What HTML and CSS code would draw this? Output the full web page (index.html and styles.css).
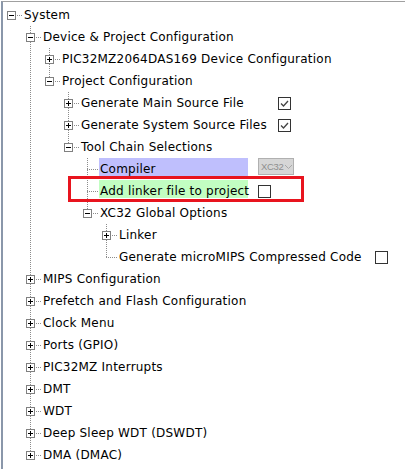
FILE: index.html
```html
<!DOCTYPE html>
<html>
<head>
<meta charset="utf-8">
<link rel="stylesheet" href="styles.css">
</head>
<body>
<div class="panel">
  <div class="tree">
    <div class="row">
      <span class="n h"><svg class="box" width="9" height="9" viewBox="0 0 9 9"><rect x="0.5" y="0.5" width="8" height="8" fill="#fff" stroke="#808080"/><path d="M2 4.5h5" stroke="#000"/></svg></span>
      <span class="label">System</span>
    </div>
    <div class="row">
      <span class="g"></span>
      <span class="n up down h"><svg class="box" width="9" height="9" viewBox="0 0 9 9"><rect x="0.5" y="0.5" width="8" height="8" fill="#fff" stroke="#808080"/><path d="M2 4.5h5" stroke="#000"/></svg></span>
      <span class="label">Device &amp; Project Configuration</span>
    </div>
    <div class="row">
      <span class="g"></span><span class="g v"></span>
      <span class="n up down h"><svg class="box" width="9" height="9" viewBox="0 0 9 9"><rect x="0.5" y="0.5" width="8" height="8" fill="#fff" stroke="#808080"/><path d="M2 4.5h5M4.5 2v5" stroke="#000"/></svg></span>
      <span class="label">PIC32MZ2064DAS169 Device Configuration</span>
    </div>
    <div class="row">
      <span class="g"></span><span class="g v"></span>
      <span class="n up h"><svg class="box" width="9" height="9" viewBox="0 0 9 9"><rect x="0.5" y="0.5" width="8" height="8" fill="#fff" stroke="#808080"/><path d="M2 4.5h5" stroke="#000"/></svg></span>
      <span class="label">Project Configuration</span>
    </div>
    <div class="row">
      <span class="g"></span><span class="g v"></span><span class="g"></span>
      <span class="n up down h"><svg class="box" width="9" height="9" viewBox="0 0 9 9"><rect x="0.5" y="0.5" width="8" height="8" fill="#fff" stroke="#808080"/><path d="M2 4.5h5M4.5 2v5" stroke="#000"/></svg></span>
      <span class="label w-gen">Generate Main Source File</span>
      <svg class="check" width="13" height="13" viewBox="0 0 13 13"><rect x="0.5" y="0.5" width="12" height="12" fill="#fff" stroke="#333"/><path d="M3 6.5l2.5 2.5l4.5-5" fill="none" stroke="#444" stroke-width="1.3"/></svg>
    </div>
    <div class="row">
      <span class="g"></span><span class="g v"></span><span class="g"></span>
      <span class="n up down h"><svg class="box" width="9" height="9" viewBox="0 0 9 9"><rect x="0.5" y="0.5" width="8" height="8" fill="#fff" stroke="#808080"/><path d="M2 4.5h5M4.5 2v5" stroke="#000"/></svg></span>
      <span class="label w-gen">Generate System Source Files</span>
      <svg class="check" width="13" height="13" viewBox="0 0 13 13"><rect x="0.5" y="0.5" width="12" height="12" fill="#fff" stroke="#333"/><path d="M3 6.5l2.5 2.5l4.5-5" fill="none" stroke="#444" stroke-width="1.3"/></svg>
    </div>
    <div class="row">
      <span class="g"></span><span class="g v"></span><span class="g"></span>
      <span class="n up h"><svg class="box" width="9" height="9" viewBox="0 0 9 9"><rect x="0.5" y="0.5" width="8" height="8" fill="#fff" stroke="#808080"/><path d="M2 4.5h5" stroke="#000"/></svg></span>
      <span class="label">Tool Chain Selections</span>
    </div>
    <div class="row">
      <span class="g"></span><span class="g v"></span><span class="g"></span><span class="g"></span>
      <span class="n up down h"></span>
      <span class="label w-tc hl-blue">Compiler</span>
      <span class="combo"><span class="combo-text">XC32</span><svg width="7" height="4" viewBox="0 0 7 4"><path d="M0 0l3.5 3.5l3.5-3.5" fill="none" stroke="#a8a8a8"/></svg></span>
    </div>
    <div class="row">
      <span class="g"></span><span class="g v"></span><span class="g"></span><span class="g"></span>
      <span class="n up down h"></span>
      <span class="label w-tc hl-green">Add linker file to project</span>
      <svg class="check" width="13" height="13" viewBox="0 0 13 13"><rect x="0.5" y="0.5" width="12" height="12" fill="#fff" stroke="#333"/></svg>
    </div>
    <div class="row">
      <span class="g"></span><span class="g v"></span><span class="g"></span><span class="g"></span>
      <span class="n up h"><svg class="box" width="9" height="9" viewBox="0 0 9 9"><rect x="0.5" y="0.5" width="8" height="8" fill="#fff" stroke="#808080"/><path d="M2 4.5h5" stroke="#000"/></svg></span>
      <span class="label">XC32 Global Options</span>
    </div>
    <div class="row">
      <span class="g"></span><span class="g v"></span><span class="g"></span><span class="g"></span><span class="g"></span>
      <span class="n up down h"><svg class="box" width="9" height="9" viewBox="0 0 9 9"><rect x="0.5" y="0.5" width="8" height="8" fill="#fff" stroke="#808080"/><path d="M2 4.5h5M4.5 2v5" stroke="#000"/></svg></span>
      <span class="label">Linker</span>
    </div>
    <div class="row">
      <span class="g"></span><span class="g v"></span><span class="g"></span><span class="g"></span><span class="g"></span>
      <span class="n up h"></span>
      <span class="label w-mm">Generate microMIPS Compressed Code</span>
      <svg class="check" width="13" height="13" viewBox="0 0 13 13"><rect x="0.5" y="0.5" width="12" height="12" fill="#fff" stroke="#333"/></svg>
    </div>
    <div class="row">
      <span class="g"></span>
      <span class="n up down h"><svg class="box" width="9" height="9" viewBox="0 0 9 9"><rect x="0.5" y="0.5" width="8" height="8" fill="#fff" stroke="#808080"/><path d="M2 4.5h5M4.5 2v5" stroke="#000"/></svg></span>
      <span class="label">MIPS Configuration</span>
    </div>
    <div class="row">
      <span class="g"></span>
      <span class="n up down h"><svg class="box" width="9" height="9" viewBox="0 0 9 9"><rect x="0.5" y="0.5" width="8" height="8" fill="#fff" stroke="#808080"/><path d="M2 4.5h5M4.5 2v5" stroke="#000"/></svg></span>
      <span class="label">Prefetch and Flash Configuration</span>
    </div>
    <div class="row">
      <span class="g"></span>
      <span class="n up down h"><svg class="box" width="9" height="9" viewBox="0 0 9 9"><rect x="0.5" y="0.5" width="8" height="8" fill="#fff" stroke="#808080"/><path d="M2 4.5h5M4.5 2v5" stroke="#000"/></svg></span>
      <span class="label">Clock Menu</span>
    </div>
    <div class="row">
      <span class="g"></span>
      <span class="n up down h"><svg class="box" width="9" height="9" viewBox="0 0 9 9"><rect x="0.5" y="0.5" width="8" height="8" fill="#fff" stroke="#808080"/><path d="M2 4.5h5M4.5 2v5" stroke="#000"/></svg></span>
      <span class="label">Ports (GPIO)</span>
    </div>
    <div class="row">
      <span class="g"></span>
      <span class="n up down h"><svg class="box" width="9" height="9" viewBox="0 0 9 9"><rect x="0.5" y="0.5" width="8" height="8" fill="#fff" stroke="#808080"/><path d="M2 4.5h5M4.5 2v5" stroke="#000"/></svg></span>
      <span class="label">PIC32MZ Interrupts</span>
    </div>
    <div class="row">
      <span class="g"></span>
      <span class="n up down h"><svg class="box" width="9" height="9" viewBox="0 0 9 9"><rect x="0.5" y="0.5" width="8" height="8" fill="#fff" stroke="#808080"/><path d="M2 4.5h5M4.5 2v5" stroke="#000"/></svg></span>
      <span class="label">DMT</span>
    </div>
    <div class="row">
      <span class="g"></span>
      <span class="n up down h"><svg class="box" width="9" height="9" viewBox="0 0 9 9"><rect x="0.5" y="0.5" width="8" height="8" fill="#fff" stroke="#808080"/><path d="M2 4.5h5M4.5 2v5" stroke="#000"/></svg></span>
      <span class="label">WDT</span>
    </div>
    <div class="row">
      <span class="g"></span>
      <span class="n up down h"><svg class="box" width="9" height="9" viewBox="0 0 9 9"><rect x="0.5" y="0.5" width="8" height="8" fill="#fff" stroke="#808080"/><path d="M2 4.5h5M4.5 2v5" stroke="#000"/></svg></span>
      <span class="label">Deep Sleep WDT (DSWDT)</span>
    </div>
    <div class="row">
      <span class="g"></span>
      <span class="n up h"><svg class="box" width="9" height="9" viewBox="0 0 9 9"><rect x="0.5" y="0.5" width="8" height="8" fill="#fff" stroke="#808080"/><path d="M2 4.5h5M4.5 2v5" stroke="#000"/></svg></span>
      <span class="label">DMA (DMAC)</span>
    </div>
  </div>
  <div class="annot"></div>
</div>
</body>
</html>
```

FILE: styles.css
```css
html, body {
  margin: 0;
  padding: 0;
  background: #fff;
}
body {
  width: 405px;
  height: 469px;
  overflow: hidden;
}
.panel {
  position: relative;
  margin: 1px 0 0 1px;
  border-top: 1px solid #a0a0a0;
  border-left: 2px solid #8a97aa;
  height: 467px;
  font-family: "DejaVu Sans", Tahoma, sans-serif;
  font-size: 12px;
  color: #000;
}
.tree {
  padding-top: 2px;
}
.row {
  display: flex;
  align-items: center;
  height: 22px;
}
.g, .n {
  flex: 0 0 19px;
  width: 19px;
  height: 22px;
  display: flex;
  align-items: center;
  background-repeat: no-repeat;
}
.g.v {
  background-image: repeating-linear-gradient(to bottom, #8c8c8c 0 1px, transparent 1px 2px);
  background-size: 1px 22px;
  background-position: 8px 0;
}
.n {
  --dv: repeating-linear-gradient(to bottom, #8c8c8c 0 1px, transparent 1px 2px);
  --dh: repeating-linear-gradient(to right, #8c8c8c 0 1px, transparent 1px 2px);
}
.n.h { background-image: var(--dh); background-size: 11px 1px; background-position: 8px 11px; }
.n.up.h { background-image: var(--dv), var(--dh); background-size: 1px 11px, 11px 1px; background-position: 8px 0, 8px 11px; }
.n.up.down.h { background-image: var(--dv), var(--dh); background-size: 1px 22px, 11px 1px; background-position: 8px 0, 8px 11px; }
.box {
  display: block;
  margin-left: 4px;
}
.label {
  box-sizing: border-box;
  margin-left: 1px;
  padding: 1px 1px 0 1px;
  height: 22px;
  line-height: 21px;
  white-space: nowrap;
  letter-spacing: 0.22px;
  background-repeat: no-repeat;
  background-size: 100% 18px;
  background-position: 0 0;
}
.w-gen { width: 187px; }
.w-tc { width: 149px; }
.w-mm { width: 246px; }
.hl-blue { background-image: linear-gradient(#bfbffd, #bfbffd); }
.hl-green { background-image: linear-gradient(#c2fec2, #c2fec2); }
.check {
  display: block;
  margin-left: 11px;
}
.w-tc + .check { margin-left: 10px; }
.combo {
  align-self: flex-start;
  box-sizing: border-box;
  margin-left: 10px;
  width: 36px;
  height: 17px;
  border: 1px solid #b0b0b0;
  background: #d6d6d6;
  display: flex;
  align-items: center;
  gap: 1px;
  padding: 0 1px 0 2px;
  font-family: "Liberation Sans", Arial, sans-serif;
  font-size: 9.5px;
  letter-spacing: -0.3px;
  color: #8e8e8e;
}
.combo-text {
  flex: none;
}
.combo svg {
  display: block;
  flex: none;
  margin-top: 1px;
}
.annot {
  position: absolute;
  left: 65px;
  top: 174px;
  width: 230px;
  height: 20px;
  border: 3px solid #e8141e;
}
```
